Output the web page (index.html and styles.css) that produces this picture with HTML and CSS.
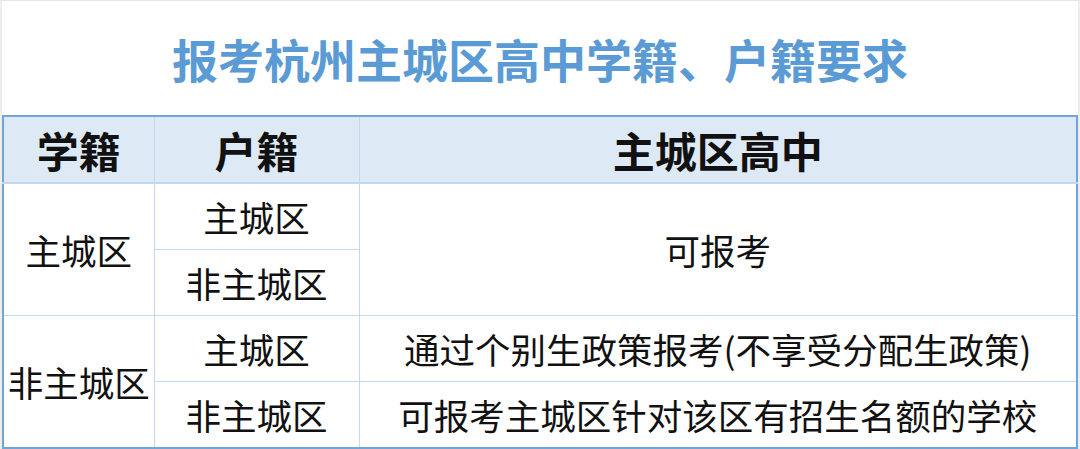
FILE: index.html
```html
<!DOCTYPE html>
<html lang="zh-CN">
<head>
<meta charset="utf-8">
<link rel="stylesheet" href="styles.css">
</head>
<body>
<div class="frame">
  <h1 class="title">报考杭州主城区高中学籍、户籍要求</h1>
  <table class="grid">
    <colgroup>
      <col class="c1"><col class="c2"><col class="c3">
    </colgroup>
    <thead>
      <tr><th>学籍</th><th>户籍</th><th>主城区高中</th></tr>
    </thead>
    <tbody>
      <tr><td rowspan="2">主城区</td><td>主城区</td><td rowspan="2">可报考</td></tr>
      <tr><td>非主城区</td></tr>
      <tr><td rowspan="2">非主城区</td><td>主城区</td><td>通过个别生政策报考(不享受分配生政策)</td></tr>
      <tr><td>非主城区</td><td>可报考主城区针对该区有招生名额的学校</td></tr>
    </tbody>
  </table>
</div>
</body>
</html>
```

FILE: styles.css
```css
html, body {
  margin: 0;
  padding: 0;
  background: #ffffff;
}
.frame {
  width: 1080px;
  height: 449px;
  box-sizing: border-box;
  border-top: 1px solid #e6e6e6;
  border-left: 2px solid #ededed;
  border-right: 2px solid #ededed;
  font-family: "Noto Sans CJK SC", "Noto Sans", sans-serif;
  overflow: hidden;
}
.title {
  margin: 0;
  height: 114px;
  display: flex;
  align-items: center;
  justify-content: center;
  font-size: 46px;
  font-weight: 700;
  color: #5b9bd5;
  letter-spacing: 0;
}
.grid {
  width: 100%;
  border-collapse: collapse;
  table-layout: fixed;
  border: 2px solid #70a5da;
}
.c1 { width: 151px; }
.c2 { width: 205px; }
.grid th, .grid td {
  border: 1px solid #c3d9ef;
  height: 65px;
  padding: 0;
  text-align: center;
  vertical-align: middle;
  color: #111111;
  line-height: 1;
}
.grid th {
  background: #ddeaf6;
  font-size: 42px;
  font-weight: 700;
  border-bottom: 2px solid #c3d9ef;
}
.grid td {
  font-size: 35.5px;
  font-weight: 400;
}
```
